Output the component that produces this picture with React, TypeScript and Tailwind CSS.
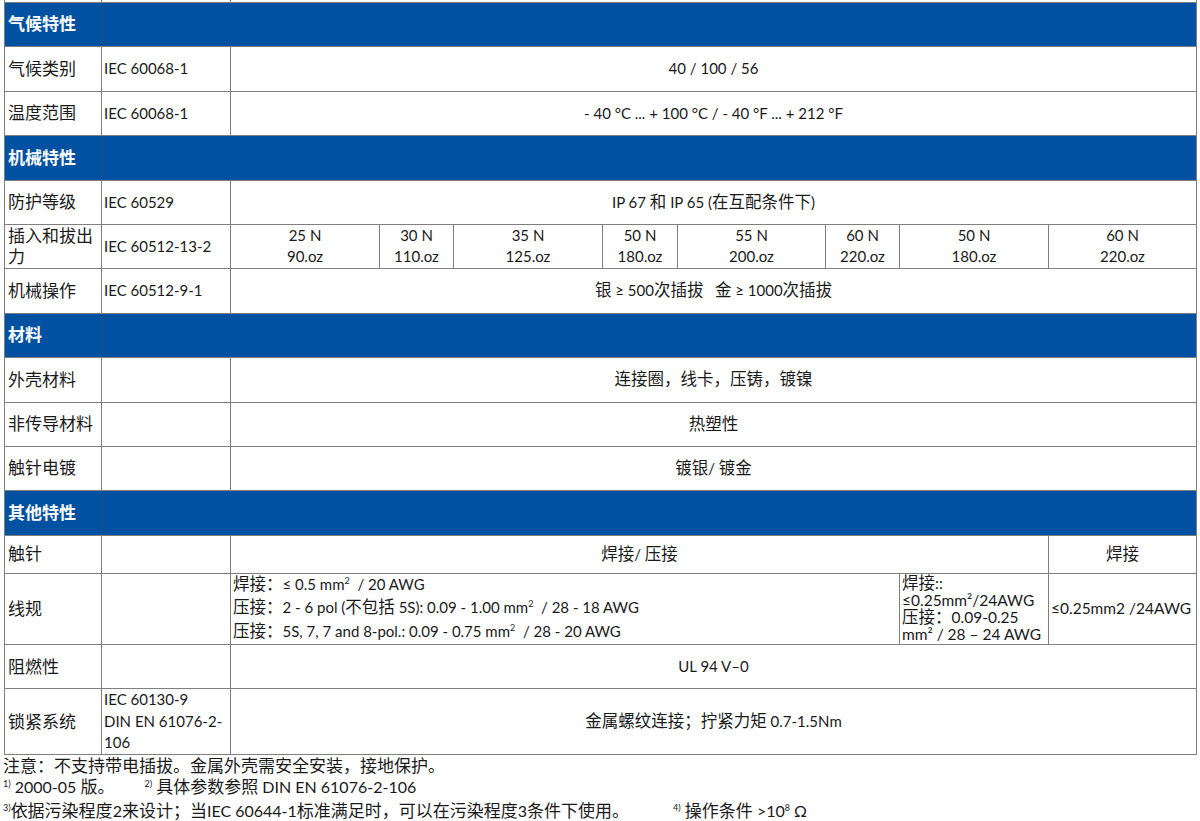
import React from "react";

const CJK = /([\u2e80-\u9fff\u3000-\u303f\uff00-\uffef]+)/;

// CJK runs are set a bit larger than the Latin text, like in the source doc
function T({ s }: { s: string }) {
  return (
    <>
      {s.split(CJK).map((p, i) =>
        i % 2 ? (
          <span key={i} className="text-[16.5px]">
            {p}
          </span>
        ) : (
          p
        )
      )}
    </>
  );
}

function Sq() {
  return <span className="relative -top-[6px] text-[9px]">2</span>;
}

const td = "border border-[#7f7f7f] p-0 align-middle";

function Section({ title, h }: { title: string; h: string }) {
  return (
    <tr className={h}>
      <td className={`${td} border-r-[#2c4a72] bg-[#0151a2] px-[3px] text-[17px] font-bold text-white`}>
        {title}
      </td>
      <td colSpan={9} className={`${td} bg-[#0151a2]`} />
    </tr>
  );
}

function Row({
  label,
  std,
  value,
  h,
}: {
  label: string;
  std?: string;
  value: string;
  h: string;
}) {
  return (
    <tr className={h}>
      <td className={`${td} px-[3px] text-[17px]`}>{label}</td>
      <td className={`${td} px-[2px]`}>{std}</td>
      <td colSpan={8} className={`${td} text-center`}>
        <T s={value} />
      </td>
    </tr>
  );
}

const forces = [
  ["25 N", "90.oz"],
  ["30 N", "110.oz"],
  ["35 N", "125.oz"],
  ["50 N", "180.oz"],
  ["55 N", "200.oz"],
  ["60 N", "220.oz"],
  ["50 N", "180.oz"],
  ["60 N", "220.oz"],
];

export default function App() {
  return (
    <div className="min-h-[821px] bg-white font-['Lato','Noto_Sans_CJK_SC',sans-serif] text-[15px] text-[#1a1a1a]">
      <table className="ml-[4px] w-[1192px] table-fixed border-collapse">
        <colgroup>
          <col className="w-[97px]" />
          <col className="w-[129px]" />
          <col className="w-[149px]" />
          <col className="w-[74px]" />
          <col className="w-[149px]" />
          <col className="w-[75px]" />
          <col className="w-[148px]" />
          <col className="w-[74px]" />
          <col className="w-[149px]" />
          <col className="w-[148px]" />
        </colgroup>
        <tbody>
          <tr className="h-[2px]">
            <td className={`${td} border-t-0`} />
            <td className={`${td} border-t-0`} />
            <td colSpan={8} className={`${td} border-t-0`} />
          </tr>

          <Section title="气候特性" h="h-[44px]" />
          <Row label="气候类别" std="IEC 60068-1" value="40 / 100 / 56" h="h-[45px]" />
          <Row
            label="温度范围"
            std="IEC 60068-1"
            value="- 40 °C ... + 100 °C / - 40 °F ... + 212 °F"
            h="h-[44px]"
          />

          <Section title="机械特性" h="h-[45px]" />
          <Row label="防护等级" std="IEC 60529" value="IP 67 和 IP 65 (在互配条件下)" h="h-[44px]" />
          <tr className="h-[44px]">
            <td className={`${td} px-[3px] text-[17px] leading-[21px]`}>插入和拔出力</td>
            <td className={`${td} px-[2px]`}>IEC 60512-13-2</td>
            {forces.map((f, i) => (
              <td key={i} className={`${td} text-center leading-[21px]`}>
                {f[0]}
                <br />
                {f[1]}
              </td>
            ))}
          </tr>
          <Row
            label="机械操作"
            std="IEC 60512-9-1"
            value={"银 ≥ 500次插拔\u00a0\u00a0\u00a0金 ≥ 1000次插拔"}
            h="h-[45px]"
          />

          <Section title="材料" h="h-[44px]" />
          <Row label="外壳材料" value="连接圈，线卡，压铸，镀镍" h="h-[45px]" />
          <Row label="非传导材料" value="热塑性" h="h-[44px]" />
          <Row label="触针电镀" value="镀银/ 镀金" h="h-[44px]" />

          <Section title="其他特性" h="h-[45px]" />
          <tr className="h-[38px]">
            <td className={`${td} px-[3px] text-[17px]`}>触针</td>
            <td className={td} />
            <td colSpan={7} className={`${td} text-center`}>
              <T s="焊接/ 压接" />
            </td>
            <td className={`${td} text-center`}>
              <T s="焊接" />
            </td>
          </tr>
          <tr className="h-[70px]">
            <td className={`${td} px-[3px] text-[17px]`}>线规</td>
            <td className={td} />
            <td colSpan={6} className={`${td} px-[2px] leading-[21.5px]`}>
              <T s="焊接：≤ 0.5 mm" />
              <Sq />
              {"\u00a0\u00a0/ 20 AWG"}
              <br />
              <T s="压接：2 - 6 pol (不包括 5S): 0.09 - 1.00 mm" />
              <Sq />
              {"\u00a0\u00a0/ 28 - 18 AWG"}
              <br />
              <T s="压接：5S, 7, 7 and 8-pol.: 0.09 - 0.75 mm" />
              <Sq />
              {"\u00a0\u00a0/ 28 - 20 AWG"}
            </td>
            <td className={`${td} px-[2px] text-[15.5px] leading-[17px]`}>
              <T s="焊接::" />
              <br />
              ≤0.25mm²/24AWG
              <br />
              <T s="压接：0.09-0.25" />
              <br />
              mm² / 28 – 24 AWG
            </td>
            <td className={`${td} px-[2px] text-[15.5px]`}>≤0.25mm2 /24AWG</td>
          </tr>
          <Row label="阻燃性" value="UL 94 V–0" h="h-[44px]" />
          <tr className="h-[65px]">
            <td className={`${td} px-[3px] text-[17px]`}>锁紧系统</td>
            <td className={`${td} px-[2px] leading-[21.5px]`}>
              IEC 60130-9
              <br />
              DIN EN 61076-2-
              <br />
              106
            </td>
            <td colSpan={8} className={`${td} text-center`}>
              <T s="金属螺纹连接；拧紧力矩 0.7-1.5Nm" />
            </td>
          </tr>
        </tbody>
      </table>

      {/* footnotes */}
      <div className="px-[3px] text-[16px] leading-[21px]">
        <div className="text-[17px]">注意：不支持带电插拔。金属外壳需安全安装，接地保护。</div>
        <div>
          <span className="relative -top-[6px] text-[9px]">1)</span> 2000-05{" "}
          <span className="text-[17px]">版。</span>
          <span className="relative -top-[6px] ml-[30px] text-[9px]">2)</span>{" "}
          <span className="text-[17px]">具体参数参照</span> DIN EN 61076-2-106
        </div>
        <div>
          <span className="relative -top-[6px] text-[9px]">3)</span>
          <span className="text-[17px]">依据污染程度</span>2
          <span className="text-[17px]">来设计；当</span>IEC 60644-1
          <span className="text-[17px]">标准满足时，可以在污染程度</span>3
          <span className="text-[17px]">条件下使用。</span>
          <span className="relative -top-[6px] ml-[44px] text-[9px]">4)</span>{" "}
          <span className="text-[17px]">操作条件</span> &gt;10
          <span className="relative -top-[6px] text-[9px]">8</span> Ω
        </div>
      </div>
    </div>
  );
}
